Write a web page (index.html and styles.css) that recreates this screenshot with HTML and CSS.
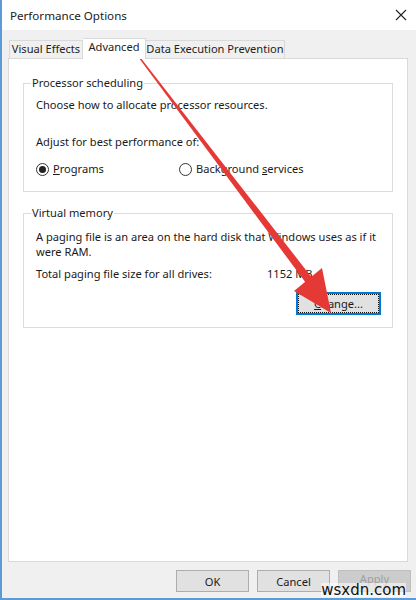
FILE: index.html
```html
<!DOCTYPE html>
<html lang="en">
<head>
    <meta charset="UTF-8">
    <meta name="viewport" content="width=device-width, initial-scale=1.0">
    <title>Performance Options</title>
    <link rel="stylesheet" href="styles.css">
</head>
<body>
    <div class="window">
        <header class="titlebar">
            <span class="title">Performance Options</span>
            <svg class="close" width="12" height="12" viewBox="0 0 12 12">
                <path d="M1 1 L11 11 M11 1 L1 11" stroke="#222" stroke-width="1.1" fill="none"/>
            </svg>
        </header>

        <div class="tabs">
            <div class="tab tab-visual">Visual Effects</div>
            <div class="tab tab-advanced active">Advanced</div>
            <div class="tab tab-dep">Data Execution Prevention</div>
        </div>

        <main class="panel">
            <fieldset class="group group-cpu">
                <legend>Processor scheduling</legend>
                <p class="line">Choose how to allocate processor resources.</p>
                <p class="line adjust">Adjust for best performance of:</p>
                <div class="radios">
                    <label class="radio-item first">
                        <span class="radio checked"></span>
                        <span><u>P</u>rograms</span>
                    </label>
                    <label class="radio-item">
                        <span class="radio"></span>
                        <span>Background <u>s</u>ervices</span>
                    </label>
                </div>
            </fieldset>

            <fieldset class="group group-vm">
                <legend>Virtual memory</legend>
                <p class="para">A paging file is an area on the hard disk that Windows uses as if it were RAM.</p>
                <div class="size-row">
                    <span class="size-label">Total paging file size for all drives:</span>
                    <span>1152 MB</span>
                </div>
                <div class="change-row">
                    <button class="btn btn-focus"><span class="focus-ring"><u>C</u>hange...</span></button>
                </div>
            </fieldset>
        </main>

        <footer class="actions">
            <button class="btn">OK</button>
            <button class="btn">Cancel</button>
            <button class="btn btn-apply" disabled>Apply</button>
        </footer>

        <!-- red annotation arrow drawn over the dialog -->
        <svg class="arrow" width="416" height="600" viewBox="0 0 416 600">
            <polygon points="132.6,49.4 133.6,48.8 314.5,281.0 308.0,285.8" fill="#e53935"/>
            <polygon points="331,313 294,291 322,268" fill="#e53935"/>
        </svg>

        <div class="watermark">wsxdn.com</div>
    </div>
</body>
</html>
```

FILE: styles.css
```css
/* Reset */
* {
    margin: 0;
    padding: 0;
    box-sizing: border-box;
}

body {
    width: 416px;
    height: 600px;
    font-family: 'Noto Sans', 'Open Sans', sans-serif;
    font-size: 11.1px;
    color: #1a1a1a;
    background-color: #f0f0f0;
}

/* Dialog window */
.window {
    position: relative;
    display: flex;
    flex-direction: column;
    width: 416px;
    height: 600px;
    background-color: #f0f0f0;
    border-left: 2px solid #5b9bd8;
    border-bottom: 2px solid #5b9bd8;
    overflow: hidden;
}

.titlebar {
    display: flex;
    justify-content: space-between;
    align-items: center;
    height: 30px;
    padding: 0 9px 0 8px;
    background-color: #ffffff;
}

.title {
    font-size: 11.6px;
    color: #222;
}

/* Tabs */
.tabs {
    display: flex;
    align-items: flex-end;
    height: 28px;
    padding-left: 7px;
}

.tab {
    height: 18px;
    line-height: 16px;
    text-align: center;
    white-space: nowrap;
    background-color: #f0f0f0;
    border: 1px solid #d9d9d9;
    border-bottom: none;
    color: #222;
}

.tab-visual {
    width: 74px;
}

.tab-advanced {
    width: 63px;
}

.tab-dep {
    width: 139px;
    border-left: none;
}

.tab.active {
    position: relative;
    height: 21px;
    margin-bottom: -1px;
    background-color: #ffffff;
    z-index: 1;
}

.tab-visual + .tab.active {
    border-left: none;
}

/* Tab panel */
.panel {
    height: 504px;
    margin: 0 8px 0 6px;
    padding: 16px 14px 0 14px;
    background-color: #ffffff;
    border: 1px solid #d9d9d9;
}

.group {
    border: 1px solid #dcdcdc;
    padding: 0 11px 0 12px;
}

.group legend {
    margin-left: -5px;
    padding: 0 1px;
    line-height: 16px;
}

.line {
    line-height: 16px;
}

.group-cpu {
    padding-bottom: 14px;
}

.group-cpu .line:first-of-type {
    margin-top: 6px;
}

.adjust {
    margin-top: 21px;
}

.radios {
    display: flex;
    margin-top: 11px;
    line-height: 16px;
}

.radio-item {
    display: flex;
    align-items: center;
    gap: 4px;
}

.radio-item.first {
    width: 143px;
}

.radio {
    display: inline-block;
    width: 13px;
    height: 13px;
    border: 1px solid #333;
    border-radius: 50%;
    background-color: #fff;
    position: relative;
}

.radio.checked::after {
    content: '';
    position: absolute;
    top: 2px;
    left: 2px;
    width: 7px;
    height: 7px;
    border-radius: 50%;
    background-color: #222;
}

.group-vm {
    margin-top: 13px;
    padding-bottom: 12px;
}

.para {
    margin-top: 8px;
    line-height: 15px;
}

.size-row {
    display: flex;
    margin-top: 7px;
    line-height: 16px;
}

.size-label {
    width: 231px;
}

.change-row {
    display: flex;
    justify-content: flex-end;
    margin-top: 10px;
}

/* Buttons */
.btn {
    width: 73px;
    height: 22px;
    font-family: inherit;
    font-size: 11.1px;
    color: #1a1a1a;
    background-color: #e1e1e1;
    border: 1px solid #adadad;
}

.btn:disabled {
    color: #a0a0a0;
    background-color: #cccccc;
    border-color: #bfbfbf;
}

.btn-apply {
    padding-bottom: 5px;
}

.btn-focus {
    width: 85px;
    height: 23px;
    padding: 1px;
    border: 1px solid #0078d7;
    box-shadow: inset 0 0 0 1px #0078d7;
}

.focus-ring {
    display: flex;
    align-items: center;
    justify-content: center;
    height: 100%;
    border: 1px dotted #111;
}

.actions {
    display: flex;
    justify-content: flex-end;
    gap: 8px;
    padding: 8px 5px 0 0;
}

/* Annotation overlay */
.arrow {
    position: absolute;
    top: 0;
    left: -2px;
    pointer-events: none;
}

.watermark {
    position: absolute;
    right: 10px;
    bottom: 1px;
    font-family: 'DejaVu Sans', sans-serif;
    font-size: 15px;
    line-height: 14px;
    color: #111;
    background-color: rgba(255, 255, 255, 0.55);
}
```
